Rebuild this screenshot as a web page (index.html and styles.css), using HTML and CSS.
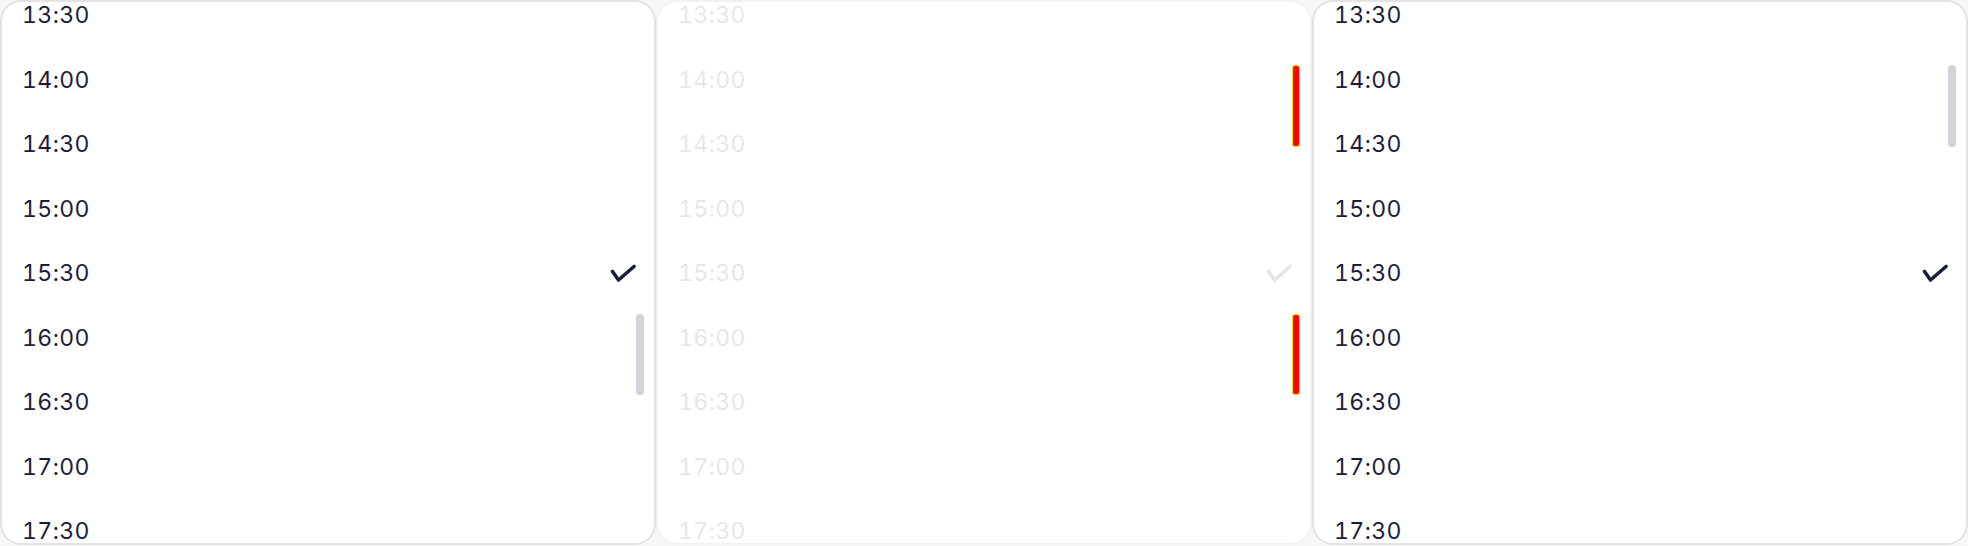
FILE: index.html
```html
<!DOCTYPE html>
<html>
<head>
<meta charset="utf-8">
<link rel="stylesheet" href="styles.css">
</head>
<body>
<div class="panels">
  <div class="panel">
    <div class="list">
      <div class="row">13:30</div>
      <div class="row">14:00</div>
      <div class="row">14:30</div>
      <div class="row">15:00</div>
      <div class="row">15:30<svg class="check" viewBox="0 0 26 19"><polyline points="2.5,7.5 8.5,16 24,2.5"/></svg></div>
      <div class="row">16:00</div>
      <div class="row">16:30</div>
      <div class="row">17:00</div>
      <div class="row">17:30</div>
    </div>
    <div class="thumb thumb-low"></div>
  </div>
  <div class="panel panel-faded">
    <div class="list faded">
      <div class="row">13:30</div>
      <div class="row">14:00</div>
      <div class="row">14:30</div>
      <div class="row">15:00</div>
      <div class="row">15:30<svg class="check" viewBox="0 0 26 19"><polyline points="2.5,7.5 8.5,16 24,2.5"/></svg></div>
      <div class="row">16:00</div>
      <div class="row">16:30</div>
      <div class="row">17:00</div>
      <div class="row">17:30</div>
    </div>
    <div class="thumb thumb-red thumb-high"></div>
    <div class="thumb thumb-red thumb-low"></div>
  </div>
  <div class="panel">
    <div class="list">
      <div class="row">13:30</div>
      <div class="row">14:00</div>
      <div class="row">14:30</div>
      <div class="row">15:00</div>
      <div class="row">15:30<svg class="check" viewBox="0 0 26 19"><polyline points="2.5,7.5 8.5,16 24,2.5"/></svg></div>
      <div class="row">16:00</div>
      <div class="row">16:30</div>
      <div class="row">17:00</div>
      <div class="row">17:30</div>
    </div>
    <div class="thumb thumb-high"></div>
  </div>
</div>
</body>
</html>
```
FILE: styles.css
```css
html, body {
  margin: 0;
  padding: 0;
}
body {
  background: #f7f7f7;
  width: 1968px;
  height: 546px;
  overflow: hidden;
  font-family: "Inter", "Noto Sans", sans-serif;
}
.panels {
  display: flex;
  height: 546px;
}
.panel {
  position: relative;
  box-sizing: border-box;
  width: 656px;
  height: 545px;
  background: #ffffff;
  border: 2px solid #e3e3e5;
  border-radius: 21px;
  overflow: hidden;
}
.panel-faded {
  border-color: #f1f1f2;
}
.list {
  margin-top: -19px;
}
.faded {
  opacity: 0.11;
}
.row {
  box-sizing: border-box;
  height: 64.5px;
  display: flex;
  align-items: center;
  justify-content: space-between;
  padding: 0 18px 0 20px;
  font-size: 23px;
  color: #1b1e3a;
  font-variant-numeric: tabular-nums;
  letter-spacing: 0.4px;
}
.check {
  width: 26px;
  height: 19px;
  fill: none;
  stroke: #1b1e3a;
  stroke-width: 3.6;
  stroke-linecap: round;
  stroke-linejoin: round;
}
.thumb {
  position: absolute;
  left: 634px;
  width: 8px;
  border-radius: 4px;
  background: #d2d2d8;
}
.thumb-high {
  top: 63px;
  height: 82px;
}
.thumb-low {
  top: 312px;
  height: 81px;
}
.thumb-red {
  background: #ff0000;
  border: 1px solid #f5e400;
  box-sizing: border-box;
  border-radius: 3px;
}
```
